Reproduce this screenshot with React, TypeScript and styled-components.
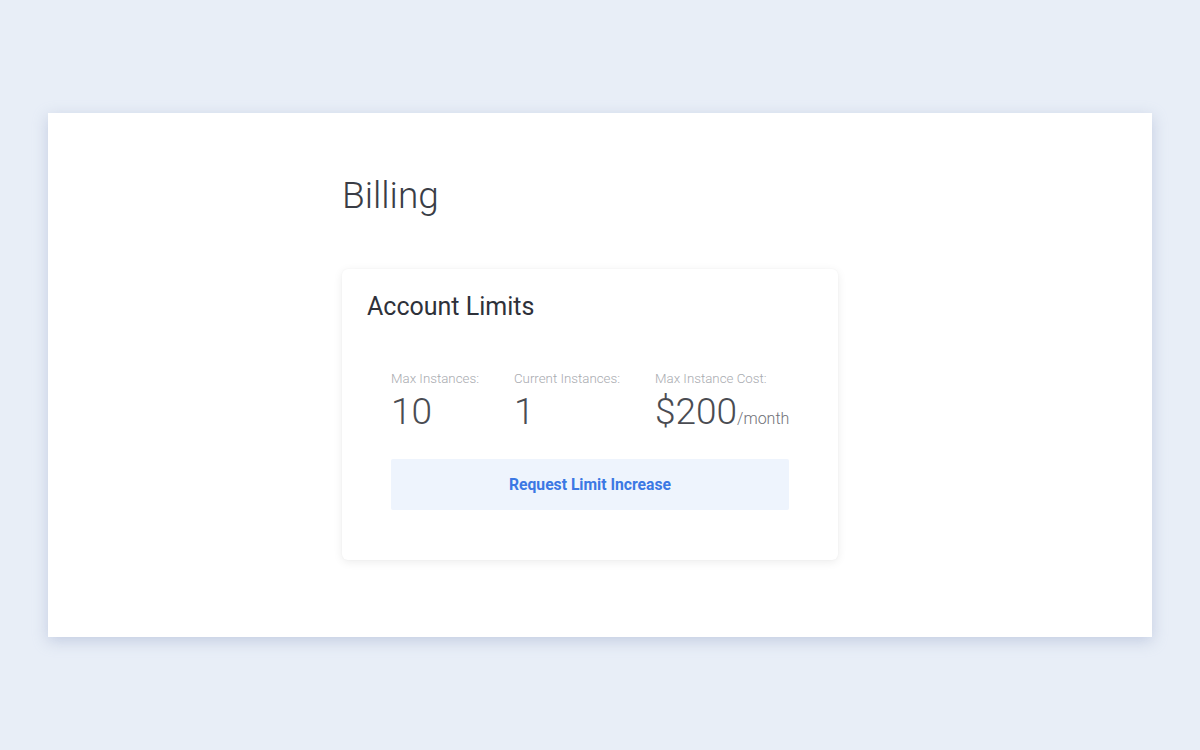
import React from "react";
import styled, { createGlobalStyle } from "styled-components";

const Global = createGlobalStyle`
  html, body { margin: 0; padding: 0; }
  body {
    background: #e8eef7;
    font-family: Roboto, "Liberation Sans", Arial, sans-serif;
    -webkit-font-smoothing: antialiased;
  }
`;

const Stage = styled.div`
  width: 1200px;
  height: 750px;
  box-sizing: border-box;
  padding: 113px 48px 0;
`;

const Frame = styled.main`
  height: 524px;
  background: #ffffff;
  box-shadow: 0 4px 14px rgba(150, 165, 200, 0.45);
  box-sizing: border-box;
  display: flex;
  padding: 60px 0 0 294px;
`;

const Content = styled.div`
  width: 496px;
  display: flex;
  flex-direction: column;
`;

const Title = styled.h1`
  margin: 0;
  font-size: 37px;
  font-weight: 300;
  color: #3a3d46;
  line-height: 44px;
  padding-top: 1px;
`;

const Card = styled.section`
  margin-top: 51px;
  width: 496px;
  height: 291px;
  box-sizing: border-box;
  background: #fff;
  border-radius: 6px;
  box-shadow: 0 2px 10px rgba(0, 0, 0, 0.08), 0 0 2px rgba(0, 0, 0, 0.04);
  padding: 23px 25px 0;
`;

const CardTitle = styled.h2`
  margin: 0;
  font-size: 25px;
  font-weight: 400;
  color: #2e313a;
  line-height: 30px;
`;

const Stats = styled.div`
  display: flex;
  gap: 35px;
  margin: 49px 0 0 24px;
`;

const Stat = styled.div`
  display: flex;
  flex-direction: column;
`;

const Label = styled.span`
  font-size: 13.3px;
  font-weight: 300;
  color: #a9abb0;
  line-height: 16px;
  white-space: nowrap;
`;

const Value = styled.span`
  font-size: 37px;
  font-weight: 300;
  color: #4a4c52;
  line-height: 42px;
  margin-top: 4px;
  white-space: nowrap;
`;

const Unit = styled.span`
  font-size: 16px;
  font-weight: 300;
  color: #6f7177;
`;

const Button = styled.button`
  display: block;
  margin: 19px 0 0 24px;
  width: 398px;
  height: 51px;
  border: none;
  border-radius: 2px;
  background: #eef4fd;
  color: #3b78e4;
  font-family: Roboto, "Liberation Sans", Arial, sans-serif;
  font-size: 15.7px;
  font-weight: 700;
  cursor: pointer;
`;

export default function App() {
  return (
    <>
      <Global />
      <Stage>
        <Frame>
          <Content>
            <Title>Billing</Title>
            <Card>
              <CardTitle>Account Limits</CardTitle>
              <Stats>
                <Stat>
                  <Label>Max Instances:</Label>
                  <Value>10</Value>
                </Stat>
                <Stat>
                  <Label>Current Instances:</Label>
                  <Value>1</Value>
                </Stat>
                <Stat>
                  <Label>Max Instance Cost:</Label>
                  <Value>
                    $200<Unit>/month</Unit>
                  </Value>
                </Stat>
              </Stats>
              <Button>Request Limit Increase</Button>
            </Card>
          </Content>
        </Frame>
      </Stage>
    </>
  );
}
